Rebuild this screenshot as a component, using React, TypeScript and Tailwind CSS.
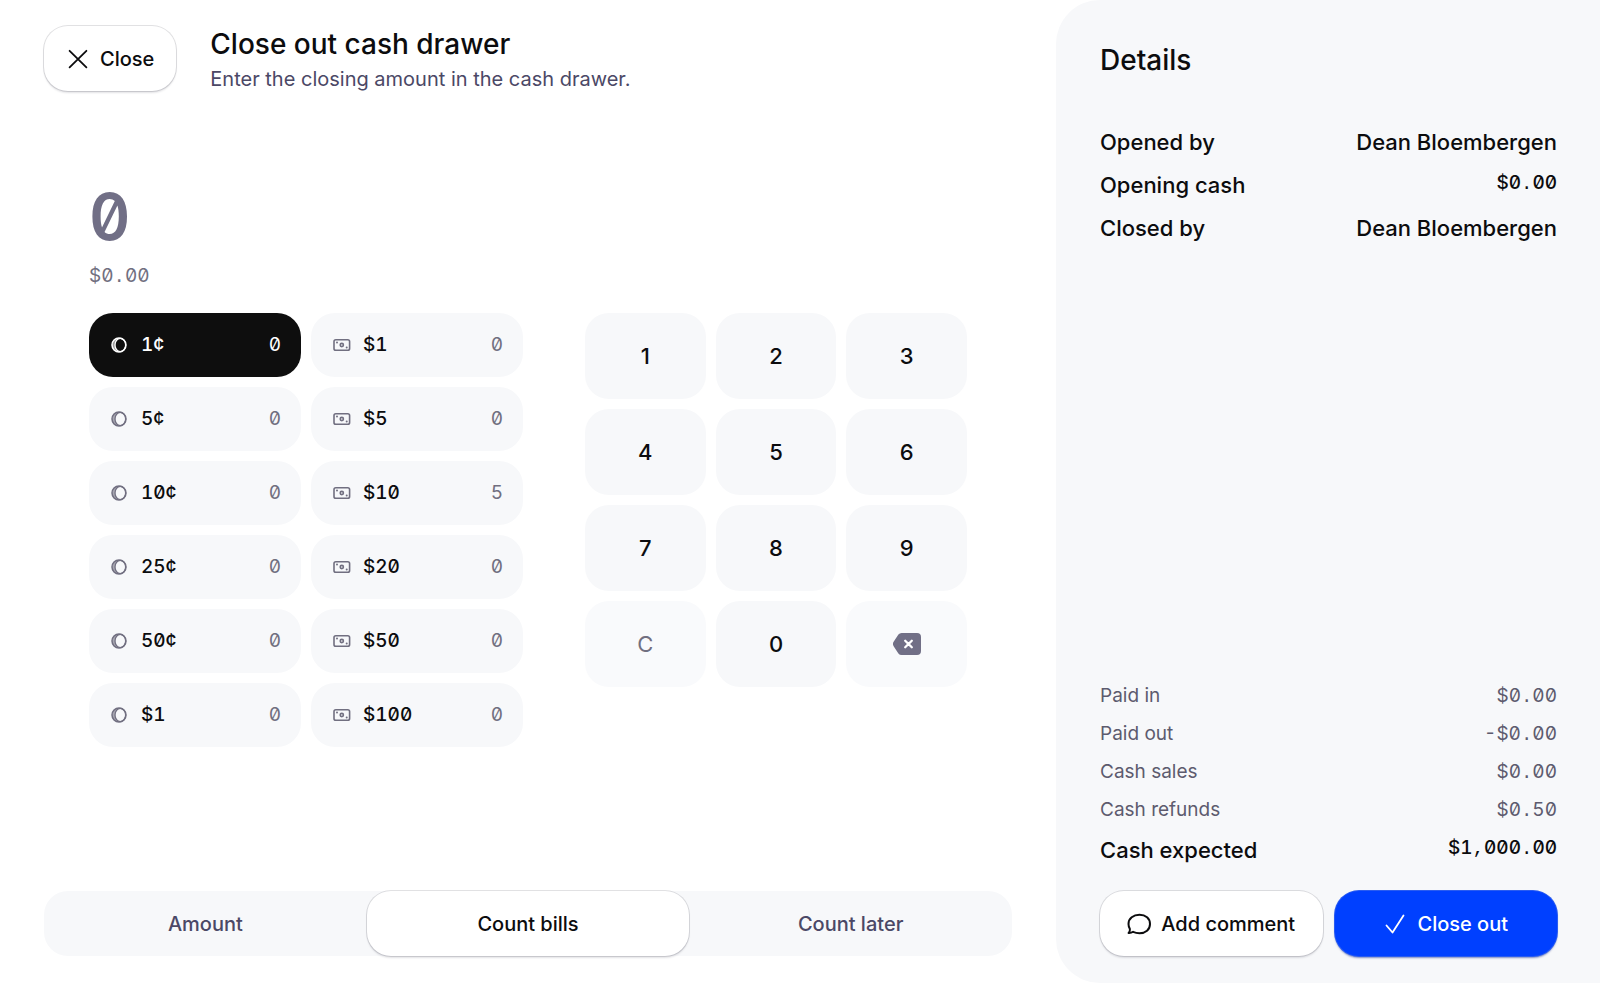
import { useState } from "react";

const coins = [
  { label: "1¢", count: 0 },
  { label: "5¢", count: 0 },
  { label: "10¢", count: 0 },
  { label: "25¢", count: 0 },
  { label: "50¢", count: 0 },
  { label: "$1", count: 0 },
];

const bills = [
  { label: "$1", count: 0 },
  { label: "$5", count: 0 },
  { label: "$10", count: 5 },
  { label: "$20", count: 0 },
  { label: "$50", count: 0 },
  { label: "$100", count: 0 },
];

const people = [
  { label: "Opened by", value: "Dean Bloembergen" },
  { label: "Opening cash", value: "$0.00", money: true },
  { label: "Closed by", value: "Dean Bloembergen" },
];

const totals = [
  { label: "Paid in", value: "$0.00" },
  { label: "Paid out", value: "-$0.00" },
  { label: "Cash sales", value: "$0.00" },
  { label: "Cash refunds", value: "$0.50" },
];

const tabs = ["Amount", "Count bills", "Count later"];
const digits = ["1", "2", "3", "4", "5", "6", "7", "8", "9"];

const outlined =
  "bg-white shadow-[0_0_0_1px_rgba(20,20,40,0.13),0_2px_2px_rgba(20,20,40,0.12)]";

// Separators get a monospace face so they take a full digit's width
function Money({ value }: { value: string }) {
  return (
    <span className="text-[19px] leading-[30px] tabular-nums slashed-zero">
      {value.split(/([.,])/).map((part, i) =>
        i % 2 ? (
          <span key={i} className="font-['Liberation_Mono',monospace] leading-none">
            {part}
          </span>
        ) : (
          part
        )
      )}
    </span>
  );
}

function CoinIcon() {
  return (
    <svg width="16" height="16" viewBox="0 0 16 16" fill="none" stroke="currentColor" aria-hidden="true">
      <path d="M8 1a7 7 0 0 0 0 14C5.500 13.500 4.300 11 4.300 8S5.500 2.500 8 1Z" fill="currentColor" fillOpacity="0.6" stroke="none" />
      <circle cx="8" cy="8" r="7" strokeWidth="1.5" />
      <ellipse cx="9.300" cy="8" rx="5.300" ry="6.600" strokeWidth="1.2" />
    </svg>
  );
}

function BillIcon() {
  return (
    <svg width="18" height="16" viewBox="0 0 18 16" fill="none" stroke="currentColor" aria-hidden="true">
      <rect x="1" y="2.700" width="15.600" height="10.600" rx="1.800" strokeWidth="1.600" />
      <circle cx="8.800" cy="8" r="1.600" strokeWidth="1.600" />
      <circle cx="4" cy="5.500" r="1" fill="currentColor" stroke="none" />
      <circle cx="13.700" cy="10.500" r="1" fill="currentColor" stroke="none" />
    </svg>
  );
}

function Denomination({ kind, label, count, active, onSelect }: {
  kind: "coin" | "bill";
  label: string;
  count: number;
  active: boolean;
  onSelect: () => void;
}) {
  return (
    <button
      type="button"
      aria-pressed={active}
      onClick={onSelect}
      className={`flex h-16 w-full items-center rounded-3xl pr-5 pl-[22px] text-[19px] tabular-nums slashed-zero ${
        active ? "bg-[#0e0e0e] text-white" : "bg-[#f7f8fa] text-[#716f80]"
      }`}
    >
      {kind === "coin" ? <CoinIcon /> : <BillIcon />}
      <span className={`font-medium ${kind === "coin" ? "ml-3.5" : "ml-3"} ${active ? "" : "text-[#0c0c0e]"}`}>
        {label}
      </span>
      <span className="ml-auto">{count}</span>
    </button>
  );
}

export default function App() {
  const [selected, setSelected] = useState("coin-0");
  const [tab, setTab] = useState("Count bills");

  return (
    <div className="flex min-h-screen bg-white font-['Inter',sans-serif] text-[#0c0c0e]">
      <main className="flex flex-1 flex-col px-11 pt-[26px] pb-[27px]">
        {/* Header */}
        <header className="flex items-start gap-[34px]">
          <button
            type="button"
            className={`flex h-[65px] items-center gap-2.5 rounded-3xl px-[22px] text-xl font-medium ${outlined}`}
          >
            <svg width="24" height="24" viewBox="0 0 24 24" fill="none" stroke="currentColor" strokeWidth="1.8" strokeLinecap="round" aria-hidden="true">
              <path d="M3.600 3.800 20.400 20.400M20.400 3.800 3.600 20.400" />
            </svg>
            Close
          </button>
          <div>
            <h1 className="text-[28px] leading-9 font-medium">Close out cash drawer</h1>
            <p className="text-xl leading-[34px] text-[#4b4866]">Enter the closing amount in the cash drawer.</p>
          </div>
        </header>

        {/* Counted amount */}
        <section className="mt-[81px] px-[45px]">
          <div className="text-[64px] leading-[80px] font-semibold text-[#716f86] tabular-nums slashed-zero">0</div>
          <div className="mt-1 flex text-[#716f80]">
            <Money value="$0.00" />
          </div>

          <div className="mt-[22px] grid grid-cols-[434fr_382fr] items-start gap-[62px]">
            <div className="grid grid-cols-2 gap-2.5">
              <div className="flex flex-col gap-2.5">
                {coins.map((coin, i) => (
                  <Denomination
                    key={i}
                    kind="coin"
                    {...coin}
                    active={selected === `coin-${i}`}
                    onSelect={() => setSelected(`coin-${i}`)}
                  />
                ))}
              </div>
              <div className="flex flex-col gap-2.5">
                {bills.map((bill, i) => (
                  <Denomination
                    key={i}
                    kind="bill"
                    {...bill}
                    active={selected === `bill-${i}`}
                    onSelect={() => setSelected(`bill-${i}`)}
                  />
                ))}
              </div>
            </div>

            {/* Keypad */}
            <div className="grid grid-cols-3 gap-2.5 text-[22px] font-medium">
              {digits.map((digit) => (
                <button key={digit} type="button" className="h-[86px] rounded-3xl bg-[#f7f8fa]">
                  {digit}
                </button>
              ))}
              <button type="button" className="h-[86px] rounded-3xl bg-[#f9fafc] font-normal text-[#716f80]">
                C
              </button>
              <button type="button" className="h-[86px] rounded-3xl bg-[#f7f8fa]">
                0
              </button>
              <button
                type="button"
                aria-label="Delete"
                className="flex h-[86px] items-center justify-center rounded-3xl bg-[#f9fafc] text-[#716f86]"
              >
                <svg width="28" height="22" viewBox="0 0 28 22" aria-hidden="true">
                  <path
                    d="M8.600 0H24a4 4 0 0 1 4 4v14a4 4 0 0 1-4 4H8.600a4 4 0 0 1-3.200-1.600L.8 13.400a4 4 0 0 1 0-4.800L5.400 1.600A4 4 0 0 1 8.600 0Z"
                    fill="currentColor"
                  />
                  <path d="m12.200 7.700 6.600 6.600m0-6.600-6.600 6.600" stroke="white" strokeWidth="2.300" strokeLinecap="round" />
                </svg>
              </button>
            </div>
          </div>
        </section>

        {/* Count mode */}
        <div role="tablist" className="mt-auto grid grid-cols-3 rounded-3xl bg-[#f7f8fa]">
          {tabs.map((name) => (
            <button
              key={name}
              type="button"
              role="tab"
              aria-selected={tab === name}
              onClick={() => setTab(name)}
              className={`h-[65px] rounded-3xl text-xl font-medium ${tab === name ? outlined : "text-[#4b4866]"}`}
            >
              {name}
            </button>
          ))}
        </div>
      </main>

      {/* Details */}
      <aside className="flex w-[34%] flex-col rounded-l-[44px] bg-[#f7f8fa] pt-10 pr-[43px] pb-[27px] pl-11">
        <h2 className="text-[28px] leading-10 font-medium">Details</h2>
        <dl className="mt-[45px] text-[22px] leading-[34px] font-medium">
          {people.map(({ label, value, money }) => (
            <div key={label} className="flex h-[43px] items-start justify-between">
              <dt>{label}</dt>
              <dd className="flex">{money ? <Money value={value} /> : value}</dd>
            </div>
          ))}
        </dl>

        <dl className="mt-auto text-[#5d5b6e]">
          {totals.map(({ label, value }) => (
            <div key={label} className="flex h-[38px] items-center justify-between">
              <dt className="text-[19px]">{label}</dt>
              <dd className="flex">
                <Money value={value} />
              </dd>
            </div>
          ))}
          <div className="flex h-[42px] items-start justify-between pt-1 font-medium text-[#0c0c0e]">
            <dt className="text-[22px] leading-[34px]">Cash expected</dt>
            <dd className="flex">
              <Money value="$1,000.00" />
            </dd>
          </div>
        </dl>

        <div className="mt-5 grid grid-cols-2 gap-3 text-xl font-medium">
          <button type="button" className={`flex h-[65px] items-center justify-center gap-2.5 rounded-3xl ${outlined}`}>
            <svg width="24" height="24" viewBox="0 0 24 24" fill="none" stroke="currentColor" strokeWidth="2" strokeLinejoin="round" aria-hidden="true">
              <path d="M12.500 2.800C18.600 2.800 23 6.400 23 12s-4.400 9.200-10.500 9.200c-2.500 0-4.700-.6-6.400-1.400-1.300.9-2.800 1.300-4.500 1.200 1.100-1.100 1.500-2.500 1.300-4C2 15.600 1.500 13.900 1.500 12c0-5.600 4.900-9.200 11-9.200Z" />
            </svg>
            Add comment
          </button>
          <button
            type="button"
            className="flex h-[65px] items-center justify-center gap-2.5 rounded-3xl bg-[#0040ff] text-white shadow-[0_0_0_1px_#2a5cf0,0_2px_2px_rgba(0,30,140,0.5)]"
          >
            <svg width="24" height="24" viewBox="0 0 24 24" fill="none" stroke="currentColor" strokeWidth="1.800" strokeLinecap="round" strokeLinejoin="round" aria-hidden="true">
              <path d="M3.500 13.500 9.500 20.500 20.500 3.500" />
            </svg>
            Close out
          </button>
        </div>
      </aside>
    </div>
  );
}
